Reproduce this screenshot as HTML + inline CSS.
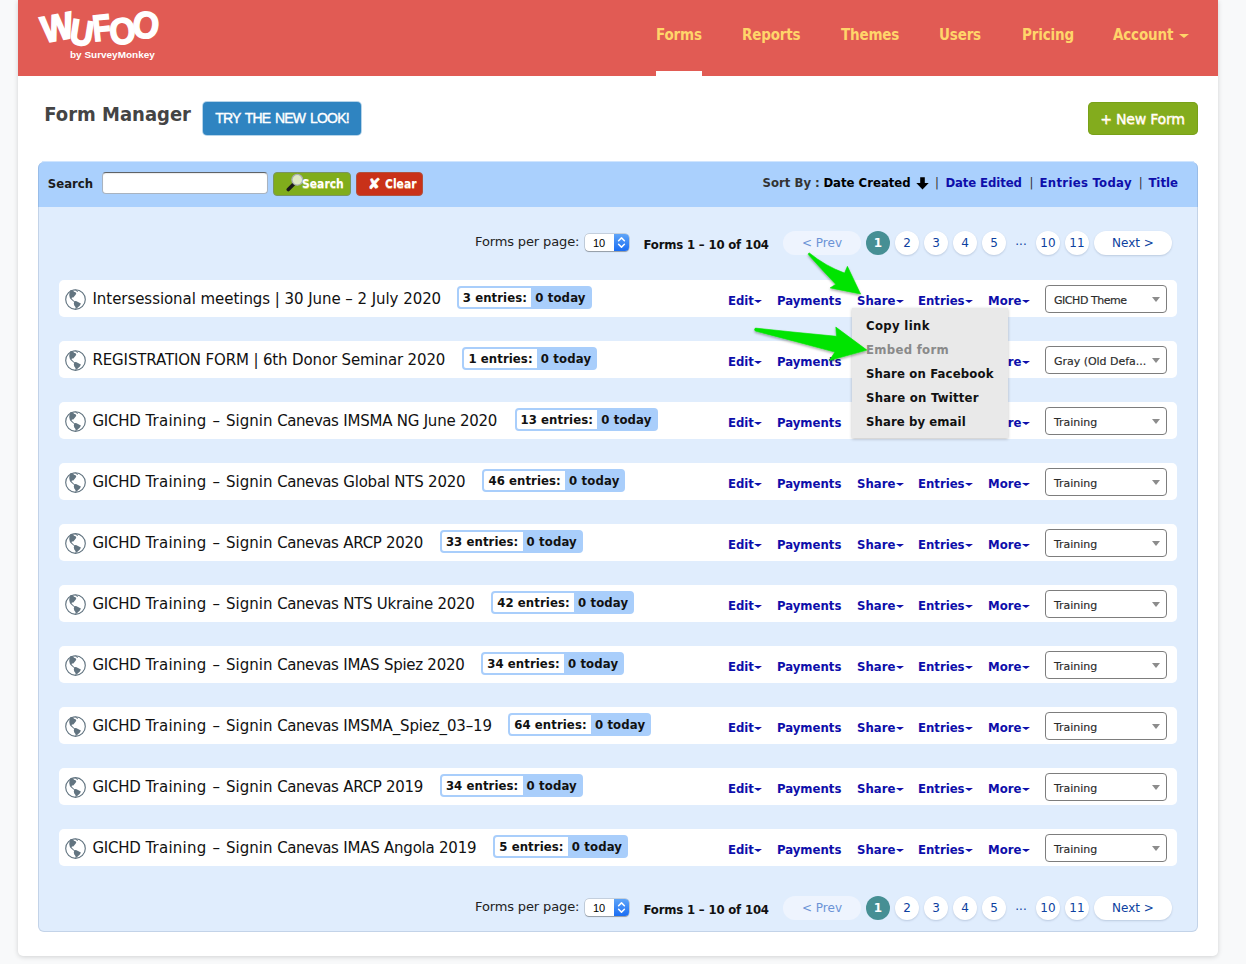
<!DOCTYPE html>
<html lang="en"><head><meta charset="utf-8"><title>Wufoo · Form Manager</title>
<style>
*{box-sizing:border-box;margin:0;padding:0}
html,body{width:1246px;height:964px;overflow:hidden}
body{background:#f8f9fa;font-family:"DejaVu Sans","Liberation Sans",sans-serif;font-size:13px;color:#222}
ul{list-style:none}
a{text-decoration:none;cursor:pointer}
#container{position:absolute;left:18px;top:0;width:1200px;height:956px;background:#fff;border-radius:0 0 5px 5px;box-shadow:0 1px 5px rgba(0,0,0,.16)}
#header{position:absolute;left:0;top:0;width:1200px;height:76px;background:#e15b54}
.logo{position:absolute;left:14px;top:4px;width:140px;height:64px;display:block}
#nav{position:absolute;left:0;top:0;width:1200px;height:75px;font-family:"DejaVu Sans Condensed","DejaVu Sans",sans-serif;font-weight:bold;font-size:15px;letter-spacing:-.17px;color:#ffd56a}
#nav li{position:absolute;top:25px;line-height:20px;white-space:nowrap}
#nav li:nth-child(1){left:638px}
#nav li:nth-child(2){left:724px}
#nav li:nth-child(3){left:823px}
#nav li:nth-child(4){left:921px}
#nav li:nth-child(5){left:1004px}
#nav li:nth-child(6){left:1095px}
#nav li.on:after{content:"";position:absolute;left:0;right:0;top:46px;height:5px;background:#fff}
#nav .crt{display:inline-block;width:0;height:0;border:5px solid transparent;border-top:4.6px solid #ffd56a;border-bottom:0;margin-left:5.5px;vertical-align:2px}
#stage{position:absolute;left:0;top:75px;width:1200px;height:880px}
h1{position:absolute;left:26.3px;top:24px;font-family:"DejaVu Sans Condensed","DejaVu Sans",sans-serif;font-size:20px;line-height:30px;font-weight:bold;color:#444;white-space:nowrap}
.trynew{position:absolute;left:185px;top:27px;width:158px;height:33px;background:#2f84c1;border-radius:4px;color:#fff;font-family:"Liberation Sans",sans-serif;font-weight:normal;font-size:14px;letter-spacing:-.8px;word-spacing:1.6px;-webkit-text-stroke:.4px #fff;line-height:33px;text-align:center;box-shadow:0 0 0 1px rgba(47,132,193,.35)}
.newform{position:absolute;left:1070px;top:27px;width:110px;height:33px;background:#83ac1d;border-radius:5px;color:#fff;font-size:14px;line-height:33px;text-align:center;text-shadow:.5px 1px 0 #d8c84a;box-shadow:0 0 0 1px rgba(110,150,20,.5) inset;letter-spacing:-.2px;-webkit-text-stroke:.3px #fff;padding-top:.7px;text-indent:-1px}
#panel{position:absolute;left:20px;top:87px;width:1160px;height:770px;background:#e0edfd;border-radius:6px}
#bar{position:absolute;left:0;top:0;width:1160px;height:45px;background:#aad0fd;border-radius:6px 6px 0 0}
.bc,#bar .sl,#sort,.cnt,.badge,.acts a,#menu li,.btn b{font-family:"DejaVu Sans Condensed","DejaVu Sans",sans-serif;font-weight:bold;font-size:13px}
#bar .sl{position:absolute;left:9.8px;top:12px;line-height:20px;color:#1b1b1b}
.sinput{position:absolute;left:64px;top:10px;width:166px;height:22px;background:#fff;border:1px solid #a9b3bf;border-top-color:#5f6367;border-radius:4px;box-shadow:inset 0 1px 1px rgba(0,0,0,.08)}
.btn{position:absolute;top:10px;height:24px;border-radius:4px;color:#fff;line-height:24px;white-space:nowrap}
.btn b{position:absolute;top:0;font-size:12px;text-shadow:0 1px 0 rgba(255,240,150,.55)}
.gsearch{left:235px;width:78px;background:#80ad1c;border:1px solid #7b9560}
.gsearch svg{position:absolute;left:11.7px;top:-2.2px}
.gsearch b{left:28px;top:-1px}
.rclear{left:318px;width:67px;background:#c93119;border:1px solid #b0523f}
.rclear .x{position:absolute;left:11px;top:-1px;font-family:"DejaVu Sans",sans-serif;font-size:15px;font-weight:bold;-webkit-text-stroke:.6px #fff}
.rclear b{left:28px;top:-1px}
#sort{position:absolute;left:0;top:11px;width:1160px;height:20px;line-height:20px;white-space:nowrap;color:#000}
#sort>*{position:absolute;top:0}
#sort .sb{color:#333}
#sort a{color:#0e0eaa}
#sort .sep{color:#333;font-weight:normal;width:10px;text-align:center}
#sort .darr{top:3.5px}
.pager{position:absolute;left:0;width:1160px;height:24px;line-height:24px}
.pager.top{top:69px}
.pager.bot{top:734px}
.pager>span{position:absolute;top:0;white-space:nowrap}
.fpp{left:437px;top:-1px !important;letter-spacing:-.13px;color:#222}
.minisel{left:547px;top:3px !important;width:44px;height:17px;background:#fff;border-radius:4px;box-shadow:0 0 0 .5px rgba(0,0,0,.25),0 1px 1px rgba(0,0,0,.25);overflow:hidden;line-height:17px}
.minisel .v{position:absolute;left:8px;top:1px;font-family:"Liberation Sans",sans-serif;font-size:11px;color:#000}
.minisel .st{position:absolute;right:0;top:0;width:15px;height:17px;background:linear-gradient(#5fa5f8,#1a6df3)}
.minisel svg{display:block}
.cnt{left:605.5px;top:2px !important;color:#111;letter-spacing:-.17px}
.pg{left:745px;height:24px;font-size:12px}
.pg>span{position:absolute;top:0;height:24px;line-height:24px;text-align:center;border-radius:12px;color:#0d3fa0}
.pg .c,.pg .next{background:#fff;box-shadow:0 1px 2px rgba(60,80,120,.22)}
.pg .c{width:24px}
.pg .pill{width:78px}
.pg .prev{left:0;background:#eef4fe;color:#6b93d6}
.pg .c:nth-child(2){left:83px}
.pg .c:nth-child(3){left:112px}
.pg .c:nth-child(4){left:141px}
.pg .c:nth-child(5){left:170px}
.pg .c:nth-child(6){left:199px}
.pg .dots{left:228px;width:20px;color:#0d3fa0;top:-2.5px !important}
.pg .c:nth-child(8){left:253px}
.pg .c:nth-child(9){left:282px}
.pg .next{left:311px}
.pg .cur{background:#468f94;color:#fff;font-weight:bold;box-shadow:none}
#list{position:absolute;left:21px;top:118px;width:1118px}
.row{position:relative;height:37px;margin-bottom:24px;background:#fff;border-radius:5px;white-space:nowrap}
.row>svg{position:absolute;left:6px;top:9px}
.row .tw{position:absolute;left:33.5px;top:0;height:37px;white-space:nowrap}
.row .t{display:inline-block;vertical-align:top;margin-top:9px;font-size:15px;line-height:20px;color:#111}
.badge{display:inline-block;margin-left:15px;vertical-align:top;margin-top:6px;height:23px;border:2px solid #a9cefb;border-radius:4px;background:#a9cefb;line-height:19px;color:#111}
.badge .e{display:inline-block;background:#fff;letter-spacing:.08px;padding:0 4.2px 0 4px;border-radius:2px 0 0 2px;height:19px}
.badge .td{display:inline-block;letter-spacing:.15px;padding:0 4px 0 4px;height:19px}
.acts a{position:absolute;top:11px;line-height:20px;color:#0e0eaa}
.acts .a1{left:669px}.acts .a2{left:718px}.acts .a3{left:798px}.acts .a4{left:859px}.acts .a5{left:929px}
.crt{display:inline-block;width:0;height:0;border-left:4px solid transparent;border-right:4px solid transparent;border-top:3.6px solid #0e0eaa;margin-left:.5px;vertical-align:1.6px}
.sel{position:absolute;left:986px;top:5px;width:122px;height:28px;border:1px solid #7d7d7d;border-radius:4px;background:#fff;font-family:"DejaVu Sans",sans-serif;font-size:11px;line-height:26px;color:#2b2b2b}
.sel span{position:absolute;left:8px;top:2px;letter-spacing:-.03px;-webkit-text-stroke:.15px #2b2b2b}
.sel i{position:absolute;right:6px;top:11px;width:0;height:0;border-left:4.5px solid transparent;border-right:4.5px solid transparent;border-top:5.5px solid #8c8c8c}
#menu{position:absolute;left:834px;top:233px;width:156px;height:130px;background:#e9e9e9;padding:6px 0 4px;box-shadow:0 1px 3px rgba(0,0,0,.25)}
#menu li{height:24px;line-height:24px;padding-left:14px;color:#111;white-space:nowrap}
#menu li.dis{color:#8a8a8a}
#panel:after{content:"";position:absolute;left:0;right:0;top:0;bottom:0;border:1px solid rgba(90,120,160,.22);border-top:0;border-radius:6px;pointer-events:none}

.arrows{position:absolute;left:-18px;top:-75px;pointer-events:none}
.logo svg{display:block}
#bar:before{content:"";position:absolute;left:4px;right:4px;top:-1px;height:1px;background:rgba(170,208,253,.55)}

</style></head>
<body>
<div id="container">
<div id="header">
<a class="logo"><svg width="140" height="64" viewBox="32 4 140 64"><g font-family="Liberation Sans, sans-serif" font-weight="bold" fill="#fff" stroke="#fff" stroke-linejoin="miter"><text transform="translate(44 43) rotate(-11) scale(0.92 1)" font-size="37" stroke-width="1.8">W</text><text transform="translate(68.5 43) rotate(9) scale(0.9 1)" font-size="35.5" stroke-width="1.8">U</text><text transform="translate(94 41.2) rotate(-6) scale(0.8 1)" font-size="36.5" stroke-width="1.8">F</text><text transform="translate(110.5 45) rotate(-5) scale(0.91 1)" font-size="37" stroke-width="1.5">O</text><text transform="translate(131 35.9) rotate(8) scale(0.91 1)" font-size="37.5" stroke-width="1.5">O</text></g><text x="70" y="58" font-family="Liberation Sans, sans-serif" font-weight="bold" font-size="9.3" fill="#fff" textLength="84.8" lengthAdjust="spacingAndGlyphs">by SurveyMonkey</text></svg></a>
<ul id="nav"><li class="on">Forms</li><li>Reports</li><li>Themes</li><li>Users</li><li>Pricing</li><li>Account<i class="crt"></i></li></ul>
</div>
<div id="stage">
<h1>Form Manager</h1><a class="trynew">TRY THE NEW LOOK!</a>
<a class="newform">+ New Form</a>
<div id="panel">
<div id="bar">
<label class="sl">Search</label><span class="sinput"></span>
<a class="btn gsearch"><svg width="20" height="22" viewBox="0 0 20 22"><path d="M7.3 13.5 L2.3 18.5" stroke="#1a1a1a" stroke-width="3.6" stroke-linecap="round"/><circle cx="11.3" cy="8.8" r="5.4" fill="#dfe9c4" stroke="#a9adb5" stroke-width="1.3"/></svg>
<b>Search</b></a><a class="btn rclear"><span class="x">✘</span><b>Clear</b></a>
<div id="sort"><span class="sb" style="left:724.6px">Sort By :</span><span class="cur" style="left:785.4px">Date Created</span><svg class="darr" style="left:877.8px" width="13" height="13" viewBox="0 0 13 13"><path d="M4.2 0.3 h4.6 v5.6 h3.9 L6.5 12.6 L0.3 5.9 h3.9 z" fill="#000"/></svg><span class="sep" style="left:894px">|</span><a style="left:907.4px;letter-spacing:-.1px">Date Edited</a><span class="sep" style="left:988.6px">|</span><a style="left:1001.5px;letter-spacing:.3px">Entries Today</a><span class="sep" style="left:1097.8px">|</span><a style="left:1110.4px">Title</a></div>
</div>
<div class="pager top">
<span class="fpp">Forms per page:</span><span class="minisel"><span class="v">10</span><span class="st"><svg width="15" height="17" viewBox="0 0 15 17"><path d="M4.6 6.7 L7.5 3.9 L10.4 6.7 M4.6 10.3 L7.5 13.1 L10.4 10.3" fill="none" stroke="#fff" stroke-width="1.5" stroke-linecap="round" stroke-linejoin="round"/></svg></span></span>
<span class="cnt">Forms 1 – 10 of 104</span>
<span class="pg"><span class="pill prev">&lt; Prev</span><span class="c cur">1</span><span class="c">2</span><span class="c">3</span><span class="c">4</span><span class="c">5</span><span class="dots">...</span><span class="c">10</span><span class="c">11</span><span class="pill next">Next &gt;</span></span>
</div>
<ul id="list">
<li class="row"><svg class="globe" width="21" height="21" viewBox="0 0 21 21"><circle cx="10.5" cy="10.5" r="9.8" fill="#fff" stroke="#627480" stroke-width="1.15"/><path d="M5 1.6 L6.6 .9 L8.3 1.7 L9 2.7 L10.6 3.3 L11.3 4.7 L10 6.6 L8.3 8.6 L6.9 8.4 L6.6 9.6 L9.4 12.3 L11 12 L13 12.9 L15.9 14.6 L14.9 16.6 L13 18.2 L11.6 19.6 L10.3 20.2 L10.6 18.2 L9.3 16.6 L8.8 14.6 L9.1 13 L5.6 10.1 L4.9 9 L4.3 6.6 L4.3 5 Z M7.6 .7 L11 .7 L13.1 2.5 L12.3 2.9 L10.6 1.6 Z" fill="#627480"/></svg>
<span class="tw"><span class="t"><span class="sfx" style="letter-spacing:-0.055px">Intersessional meetings | 30 June – 2 July 2020</span></span><span class="badge" style="margin-left:15.65px"><span class="e">3 entries:</span><span class="td">0 today</span></span></span>
<span class="acts"><a class="a1">Edit<i class="crt"></i></a><a class="a2">Payments</a><a class="a3">Share<i class="crt"></i></a><a class="a4">Entries<i class="crt"></i></a><a class="a5">More<i class="crt"></i></a></span>
<span class="sel"><span style="letter-spacing:-.45px">GICHD Theme</span><i></i></span></li>
<li class="row"><svg class="globe" width="21" height="21" viewBox="0 0 21 21"><circle cx="10.5" cy="10.5" r="9.8" fill="#fff" stroke="#627480" stroke-width="1.15"/><path d="M5 1.6 L6.6 .9 L8.3 1.7 L9 2.7 L10.6 3.3 L11.3 4.7 L10 6.6 L8.3 8.6 L6.9 8.4 L6.6 9.6 L9.4 12.3 L11 12 L13 12.9 L15.9 14.6 L14.9 16.6 L13 18.2 L11.6 19.6 L10.3 20.2 L10.6 18.2 L9.3 16.6 L8.8 14.6 L9.1 13 L5.6 10.1 L4.9 9 L4.3 6.6 L4.3 5 Z M7.6 .7 L11 .7 L13.1 2.5 L12.3 2.9 L10.6 1.6 Z" fill="#627480"/></svg>
<span class="tw"><span class="t"><span class="sfx" style="letter-spacing:-0.143px">REGISTRATION FORM | 6th Donor Seminar 2020</span></span><span class="badge" style="margin-left:17.24px"><span class="e">1 entries:</span><span class="td">0 today</span></span></span>
<span class="acts"><a class="a1">Edit<i class="crt"></i></a><a class="a2">Payments</a><a class="a3">Share<i class="crt"></i></a><a class="a4">Entries<i class="crt"></i></a><a class="a5">More<i class="crt"></i></a></span>
<span class="sel"><span>Gray (Old Defa...</span><i></i></span></li>
<li class="row"><svg class="globe" width="21" height="21" viewBox="0 0 21 21"><circle cx="10.5" cy="10.5" r="9.8" fill="#fff" stroke="#627480" stroke-width="1.15"/><path d="M5 1.6 L6.6 .9 L8.3 1.7 L9 2.7 L10.6 3.3 L11.3 4.7 L10 6.6 L8.3 8.6 L6.9 8.4 L6.6 9.6 L9.4 12.3 L11 12 L13 12.9 L15.9 14.6 L14.9 16.6 L13 18.2 L11.6 19.6 L10.3 20.2 L10.6 18.2 L9.3 16.6 L8.8 14.6 L9.1 13 L5.6 10.1 L4.9 9 L4.3 6.6 L4.3 5 Z M7.6 .7 L11 .7 L13.1 2.5 L12.3 2.9 L10.6 1.6 Z" fill="#627480"/></svg>
<span class="tw"><span class="t"><span style="letter-spacing:-.25px">GICHD</span> <span style="letter-spacing:.24px">Training</span><span style="margin-left:1.3px"> </span>–<span style="margin-left:1.2px"> </span>Signin <span style="letter-spacing:-.43px">Canevas</span> <span class="sfx" style="letter-spacing:-0.232px">IMSMA NG June 2020</span></span><span class="badge" style="margin-left:17.33px"><span class="e">13 entries:</span><span class="td">0 today</span></span></span>
<span class="acts"><a class="a1">Edit<i class="crt"></i></a><a class="a2">Payments</a><a class="a3">Share<i class="crt"></i></a><a class="a4">Entries<i class="crt"></i></a><a class="a5">More<i class="crt"></i></a></span>
<span class="sel"><span>Training</span><i></i></span></li>
<li class="row"><svg class="globe" width="21" height="21" viewBox="0 0 21 21"><circle cx="10.5" cy="10.5" r="9.8" fill="#fff" stroke="#627480" stroke-width="1.15"/><path d="M5 1.6 L6.6 .9 L8.3 1.7 L9 2.7 L10.6 3.3 L11.3 4.7 L10 6.6 L8.3 8.6 L6.9 8.4 L6.6 9.6 L9.4 12.3 L11 12 L13 12.9 L15.9 14.6 L14.9 16.6 L13 18.2 L11.6 19.6 L10.3 20.2 L10.6 18.2 L9.3 16.6 L8.8 14.6 L9.1 13 L5.6 10.1 L4.9 9 L4.3 6.6 L4.3 5 Z M7.6 .7 L11 .7 L13.1 2.5 L12.3 2.9 L10.6 1.6 Z" fill="#627480"/></svg>
<span class="tw"><span class="t"><span style="letter-spacing:-.25px">GICHD</span> <span style="letter-spacing:.24px">Training</span><span style="margin-left:1.3px"> </span>–<span style="margin-left:1.2px"> </span>Signin <span style="letter-spacing:-.43px">Canevas</span> <span class="sfx" style="letter-spacing:-0.223px">Global NTS 2020</span></span><span class="badge" style="margin-left:17.02px"><span class="e">46 entries:</span><span class="td">0 today</span></span></span>
<span class="acts"><a class="a1">Edit<i class="crt"></i></a><a class="a2">Payments</a><a class="a3">Share<i class="crt"></i></a><a class="a4">Entries<i class="crt"></i></a><a class="a5">More<i class="crt"></i></a></span>
<span class="sel"><span>Training</span><i></i></span></li>
<li class="row"><svg class="globe" width="21" height="21" viewBox="0 0 21 21"><circle cx="10.5" cy="10.5" r="9.8" fill="#fff" stroke="#627480" stroke-width="1.15"/><path d="M5 1.6 L6.6 .9 L8.3 1.7 L9 2.7 L10.6 3.3 L11.3 4.7 L10 6.6 L8.3 8.6 L6.9 8.4 L6.6 9.6 L9.4 12.3 L11 12 L13 12.9 L15.9 14.6 L14.9 16.6 L13 18.2 L11.6 19.6 L10.3 20.2 L10.6 18.2 L9.3 16.6 L8.8 14.6 L9.1 13 L5.6 10.1 L4.9 9 L4.3 6.6 L4.3 5 Z M7.6 .7 L11 .7 L13.1 2.5 L12.3 2.9 L10.6 1.6 Z" fill="#627480"/></svg>
<span class="tw"><span class="t"><span style="letter-spacing:-.25px">GICHD</span> <span style="letter-spacing:.24px">Training</span><span style="margin-left:1.3px"> </span>–<span style="margin-left:1.2px"> </span>Signin <span style="letter-spacing:-.43px">Canevas</span> <span class="sfx" style="letter-spacing:-0.287px">ARCP 2020</span></span><span class="badge" style="margin-left:16.79px"><span class="e">33 entries:</span><span class="td">0 today</span></span></span>
<span class="acts"><a class="a1">Edit<i class="crt"></i></a><a class="a2">Payments</a><a class="a3">Share<i class="crt"></i></a><a class="a4">Entries<i class="crt"></i></a><a class="a5">More<i class="crt"></i></a></span>
<span class="sel"><span>Training</span><i></i></span></li>
<li class="row"><svg class="globe" width="21" height="21" viewBox="0 0 21 21"><circle cx="10.5" cy="10.5" r="9.8" fill="#fff" stroke="#627480" stroke-width="1.15"/><path d="M5 1.6 L6.6 .9 L8.3 1.7 L9 2.7 L10.6 3.3 L11.3 4.7 L10 6.6 L8.3 8.6 L6.9 8.4 L6.6 9.6 L9.4 12.3 L11 12 L13 12.9 L15.9 14.6 L14.9 16.6 L13 18.2 L11.6 19.6 L10.3 20.2 L10.6 18.2 L9.3 16.6 L8.8 14.6 L9.1 13 L5.6 10.1 L4.9 9 L4.3 6.6 L4.3 5 Z M7.6 .7 L11 .7 L13.1 2.5 L12.3 2.9 L10.6 1.6 Z" fill="#627480"/></svg>
<span class="tw"><span class="t"><span style="letter-spacing:-.25px">GICHD</span> <span style="letter-spacing:.24px">Training</span><span style="margin-left:1.3px"> </span>–<span style="margin-left:1.2px"> </span>Signin <span style="letter-spacing:-.43px">Canevas</span> <span class="sfx" style="letter-spacing:-0.271px">NTS Ukraine 2020</span></span><span class="badge" style="margin-left:16.77px"><span class="e">42 entries:</span><span class="td">0 today</span></span></span>
<span class="acts"><a class="a1">Edit<i class="crt"></i></a><a class="a2">Payments</a><a class="a3">Share<i class="crt"></i></a><a class="a4">Entries<i class="crt"></i></a><a class="a5">More<i class="crt"></i></a></span>
<span class="sel"><span>Training</span><i></i></span></li>
<li class="row"><svg class="globe" width="21" height="21" viewBox="0 0 21 21"><circle cx="10.5" cy="10.5" r="9.8" fill="#fff" stroke="#627480" stroke-width="1.15"/><path d="M5 1.6 L6.6 .9 L8.3 1.7 L9 2.7 L10.6 3.3 L11.3 4.7 L10 6.6 L8.3 8.6 L6.9 8.4 L6.6 9.6 L9.4 12.3 L11 12 L13 12.9 L15.9 14.6 L14.9 16.6 L13 18.2 L11.6 19.6 L10.3 20.2 L10.6 18.2 L9.3 16.6 L8.8 14.6 L9.1 13 L5.6 10.1 L4.9 9 L4.3 6.6 L4.3 5 Z M7.6 .7 L11 .7 L13.1 2.5 L12.3 2.9 L10.6 1.6 Z" fill="#627480"/></svg>
<span class="tw"><span class="t"><span style="letter-spacing:-.25px">GICHD</span> <span style="letter-spacing:.24px">Training</span><span style="margin-left:1.3px"> </span>–<span style="margin-left:1.2px"> </span>Signin <span style="letter-spacing:-.43px">Canevas</span> <span class="sfx" style="letter-spacing:-0.264px">IMAS Spiez 2020</span></span><span class="badge" style="margin-left:16.76px"><span class="e">34 entries:</span><span class="td">0 today</span></span></span>
<span class="acts"><a class="a1">Edit<i class="crt"></i></a><a class="a2">Payments</a><a class="a3">Share<i class="crt"></i></a><a class="a4">Entries<i class="crt"></i></a><a class="a5">More<i class="crt"></i></a></span>
<span class="sel"><span>Training</span><i></i></span></li>
<li class="row"><svg class="globe" width="21" height="21" viewBox="0 0 21 21"><circle cx="10.5" cy="10.5" r="9.8" fill="#fff" stroke="#627480" stroke-width="1.15"/><path d="M5 1.6 L6.6 .9 L8.3 1.7 L9 2.7 L10.6 3.3 L11.3 4.7 L10 6.6 L8.3 8.6 L6.9 8.4 L6.6 9.6 L9.4 12.3 L11 12 L13 12.9 L15.9 14.6 L14.9 16.6 L13 18.2 L11.6 19.6 L10.3 20.2 L10.6 18.2 L9.3 16.6 L8.8 14.6 L9.1 13 L5.6 10.1 L4.9 9 L4.3 6.6 L4.3 5 Z M7.6 .7 L11 .7 L13.1 2.5 L12.3 2.9 L10.6 1.6 Z" fill="#627480"/></svg>
<span class="tw"><span class="t"><span style="letter-spacing:-.25px">GICHD</span> <span style="letter-spacing:.24px">Training</span><span style="margin-left:1.3px"> </span>–<span style="margin-left:1.2px"> </span>Signin <span style="letter-spacing:-.43px">Canevas</span> <span class="sfx" style="letter-spacing:-0.145px">IMSMA_Spiez_03–19</span></span><span class="badge" style="margin-left:16.35px"><span class="e">64 entries:</span><span class="td">0 today</span></span></span>
<span class="acts"><a class="a1">Edit<i class="crt"></i></a><a class="a2">Payments</a><a class="a3">Share<i class="crt"></i></a><a class="a4">Entries<i class="crt"></i></a><a class="a5">More<i class="crt"></i></a></span>
<span class="sel"><span>Training</span><i></i></span></li>
<li class="row"><svg class="globe" width="21" height="21" viewBox="0 0 21 21"><circle cx="10.5" cy="10.5" r="9.8" fill="#fff" stroke="#627480" stroke-width="1.15"/><path d="M5 1.6 L6.6 .9 L8.3 1.7 L9 2.7 L10.6 3.3 L11.3 4.7 L10 6.6 L8.3 8.6 L6.9 8.4 L6.6 9.6 L9.4 12.3 L11 12 L13 12.9 L15.9 14.6 L14.9 16.6 L13 18.2 L11.6 19.6 L10.3 20.2 L10.6 18.2 L9.3 16.6 L8.8 14.6 L9.1 13 L5.6 10.1 L4.9 9 L4.3 6.6 L4.3 5 Z M7.6 .7 L11 .7 L13.1 2.5 L12.3 2.9 L10.6 1.6 Z" fill="#627480"/></svg>
<span class="tw"><span class="t"><span style="letter-spacing:-.25px">GICHD</span> <span style="letter-spacing:.24px">Training</span><span style="margin-left:1.3px"> </span>–<span style="margin-left:1.2px"> </span>Signin <span style="letter-spacing:-.43px">Canevas</span> <span class="sfx" style="letter-spacing:-0.287px">ARCP 2019</span></span><span class="badge" style="margin-left:16.79px"><span class="e">34 entries:</span><span class="td">0 today</span></span></span>
<span class="acts"><a class="a1">Edit<i class="crt"></i></a><a class="a2">Payments</a><a class="a3">Share<i class="crt"></i></a><a class="a4">Entries<i class="crt"></i></a><a class="a5">More<i class="crt"></i></a></span>
<span class="sel"><span>Training</span><i></i></span></li>
<li class="row"><svg class="globe" width="21" height="21" viewBox="0 0 21 21"><circle cx="10.5" cy="10.5" r="9.8" fill="#fff" stroke="#627480" stroke-width="1.15"/><path d="M5 1.6 L6.6 .9 L8.3 1.7 L9 2.7 L10.6 3.3 L11.3 4.7 L10 6.6 L8.3 8.6 L6.9 8.4 L6.6 9.6 L9.4 12.3 L11 12 L13 12.9 L15.9 14.6 L14.9 16.6 L13 18.2 L11.6 19.6 L10.3 20.2 L10.6 18.2 L9.3 16.6 L8.8 14.6 L9.1 13 L5.6 10.1 L4.9 9 L4.3 6.6 L4.3 5 Z M7.6 .7 L11 .7 L13.1 2.5 L12.3 2.9 L10.6 1.6 Z" fill="#627480"/></svg>
<span class="tw"><span class="t"><span style="letter-spacing:-.25px">GICHD</span> <span style="letter-spacing:.24px">Training</span><span style="margin-left:1.3px"> </span>–<span style="margin-left:1.2px"> </span>Signin <span style="letter-spacing:-.43px">Canevas</span> <span class="sfx" style="letter-spacing:-0.229px">IMAS Angola 2019</span></span><span class="badge" style="margin-left:17.03px"><span class="e">5 entries:</span><span class="td">0 today</span></span></span>
<span class="acts"><a class="a1">Edit<i class="crt"></i></a><a class="a2">Payments</a><a class="a3">Share<i class="crt"></i></a><a class="a4">Entries<i class="crt"></i></a><a class="a5">More<i class="crt"></i></a></span>
<span class="sel"><span>Training</span><i></i></span></li>
</ul>
<div class="pager bot">
<span class="fpp">Forms per page:</span><span class="minisel"><span class="v">10</span><span class="st"><svg width="15" height="17" viewBox="0 0 15 17"><path d="M4.6 6.7 L7.5 3.9 L10.4 6.7 M4.6 10.3 L7.5 13.1 L10.4 10.3" fill="none" stroke="#fff" stroke-width="1.5" stroke-linecap="round" stroke-linejoin="round"/></svg></span></span>
<span class="cnt">Forms 1 – 10 of 104</span>
<span class="pg"><span class="pill prev">&lt; Prev</span><span class="c cur">1</span><span class="c">2</span><span class="c">3</span><span class="c">4</span><span class="c">5</span><span class="dots">...</span><span class="c">10</span><span class="c">11</span><span class="pill next">Next &gt;</span></span>
</div>
</div>
<ul id="menu"><li style="letter-spacing:.33px">Copy link</li><li class="dis" style="letter-spacing:.3px">Embed form</li><li style="letter-spacing:.15px">Share on Facebook</li><li style="letter-spacing:.23px">Share on Twitter</li><li style="letter-spacing:.09px">Share by email</li></ul>
<svg class="arrows" width="1246" height="964" viewBox="0 0 1246 964"><defs><filter id="ash" x="-20%" y="-20%" width="140%" height="150%"><feDropShadow dx="0" dy="1.5" stdDeviation="1.2" flood-color="#000" flood-opacity=".35"/></filter></defs><g fill="#00e400" stroke="#00e400" stroke-width=".6" stroke-linejoin="round" filter="url(#ash)"><path d="M809.4 253 Q825.3 266 844.6 273.1 L847.4 266.3 L860.6 294 L830.1 287.9 L835.7 284.3 Q822 270 808.3 254.6 Q808.2 253 809.4 253 Z"/><path d="M755.4 328.1 Q796 332.5 836.6 336.3 L835.8 327.1 L866.9 350.1 L829.3 360.5 L834.9 352.1 Q795.6 341.4 755.3 331 Q753.8 329.4 755.4 328.1 Z"/></g></svg>

</div>
</div>
</body></html>
